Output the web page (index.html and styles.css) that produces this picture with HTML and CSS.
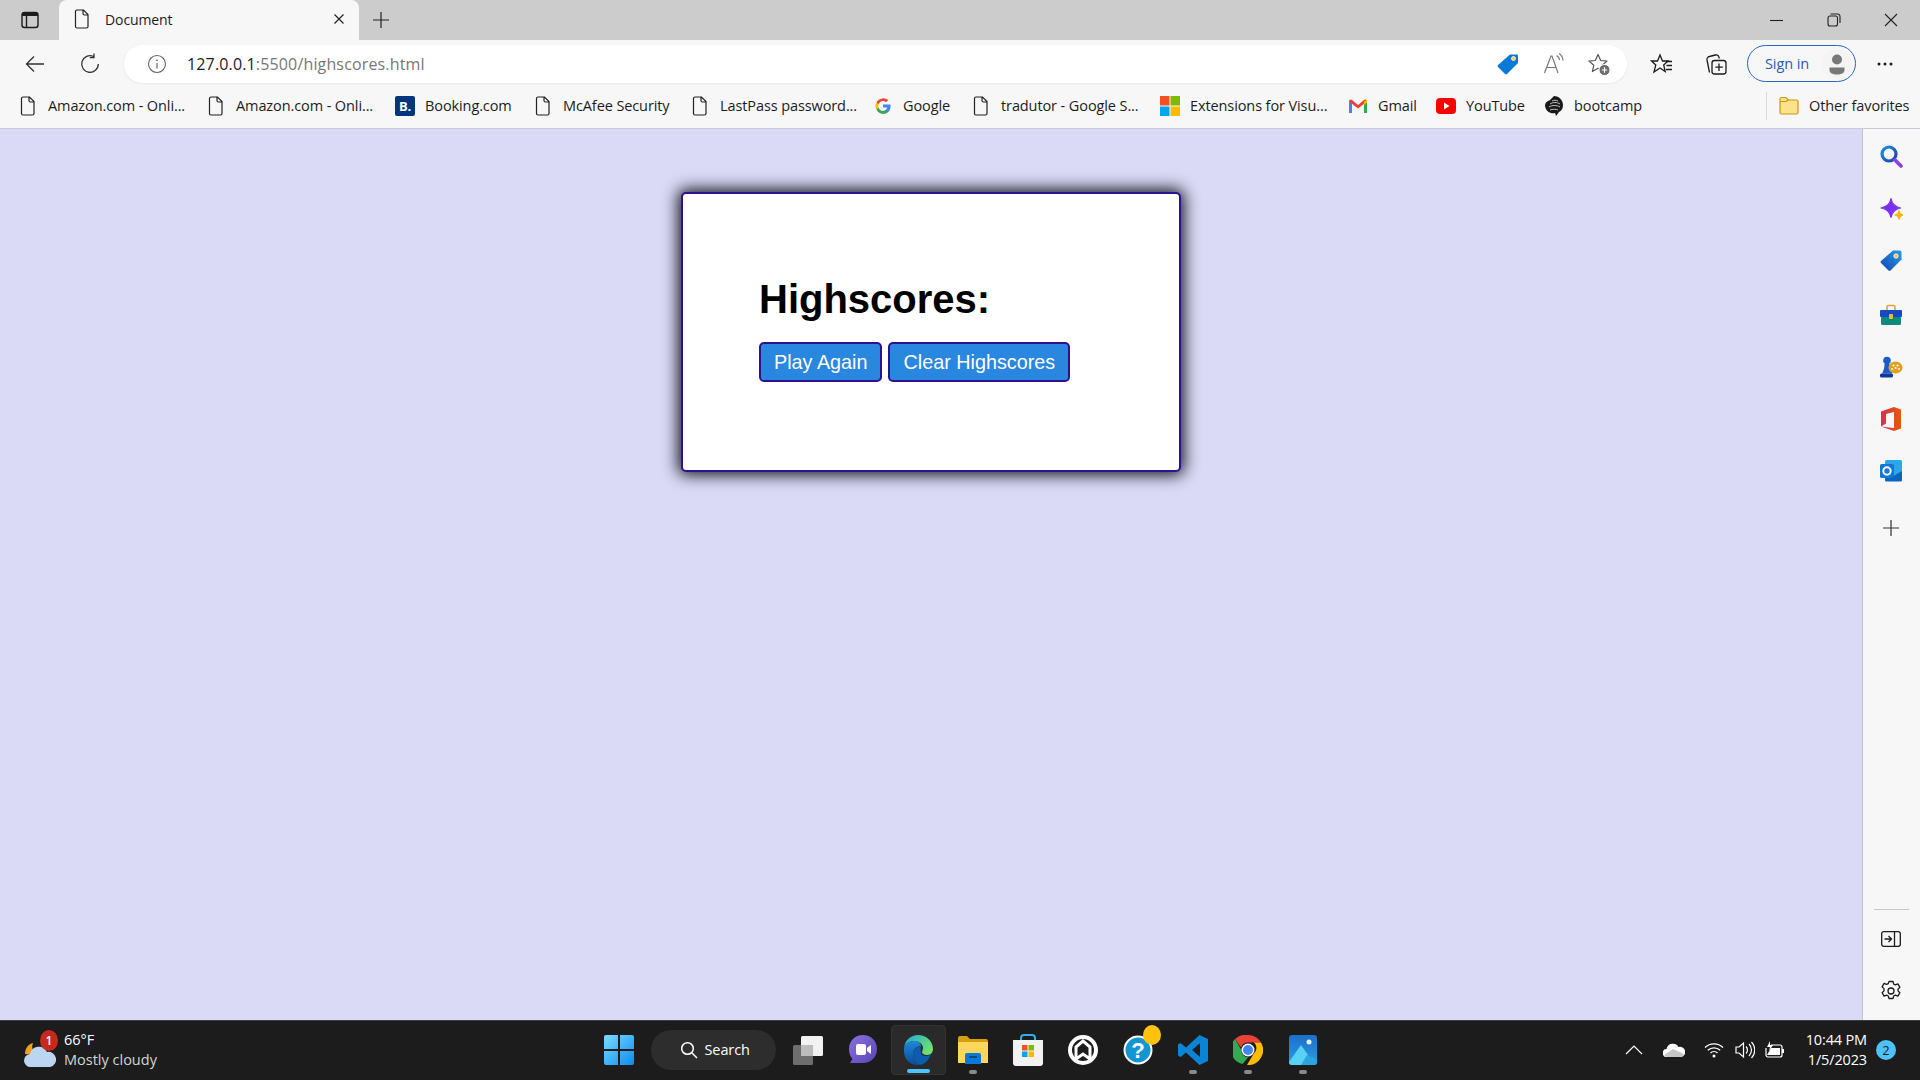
FILE: index.html
```html
<!DOCTYPE html>
<html lang="en">
<head>
<meta charset="utf-8">
<title>Document</title>
<link rel="stylesheet" href="styles.css">
</head>
<body>
<div class="screen">
  <header class="titlebar">
    <div class="slot tabs-btn">
      <svg width="20" height="20" viewBox="0 0 20 20"><rect x="2" y="2.500" width="16" height="15" rx="2.500" fill="none" stroke="#1c1c1c" stroke-width="1.400"/><path d="M2 6V5a2.500 2.500 0 0 1 2.500-2.500h11A2.500 2.500 0 0 1 18 5v1z" fill="#1c1c1c"/><path d="M6.500 6v11" stroke="#1c1c1c" stroke-width="1.400"/></svg>
    </div>
    <div class="tab">
      <svg class="doc" width="20" height="22" viewBox="0 0 20 22"><path d="M5 2h6.500L16 6.500V18.500a1.500 1.500 0 0 1-1.500 1.500H5a1.500 1.500 0 0 1-1.500-1.500v-15A1.500 1.500 0 0 1 5 2zM11 2v3.500A1.500 1.500 0 0 0 12.500 7H16" fill="none" stroke="#222" stroke-width="1.200"/></svg>
      <span class="tab-title">Document</span>
      <svg class="tab-close" width="12" height="12" viewBox="0 0 12 12"><path d="M1.500 1.500l9 9M10.500 1.500l-9 9" stroke="#222" stroke-width="1.200"/></svg>
    </div>
    <svg class="new-tab" width="18" height="18" viewBox="0 0 18 18"><path d="M9 1v16M1 9h16" stroke="#222" stroke-width="1.200"/></svg>
    <div class="window-controls">
      <svg width="14" height="14" viewBox="0 0 14 14"><path d="M0 7.500h13" stroke="#222" stroke-width="1.100"/></svg>
      <svg width="14" height="14" viewBox="0 0 14 14"><rect x="1" y="3" width="9.500" height="10" rx="2" fill="none" stroke="#222" stroke-width="1.100"/><path d="M3.500 1h7A2.500 2.500 0 0 1 13 3.500V10" fill="none" stroke="#222" stroke-width="1.100"/></svg>
      <svg width="14" height="14" viewBox="0 0 14 14"><path d="M1 1l12 12M13 1L1 13" stroke="#222" stroke-width="1.100"/></svg>
    </div>
  </header>

  <div class="toolbar">
    <button class="tool back" aria-label="Back"><svg width="22" height="22" viewBox="0 0 22 22"><path d="M20 11H2.500M10 3.500L2.500 11l7.500 7.500" fill="none" stroke="#333" stroke-width="1.300"/></svg></button>
    <button class="tool refresh" aria-label="Refresh"><svg width="22" height="22" viewBox="0 0 22 22"><path d="M14.500 3.500A8.300 8.300 0 1 0 19.300 11M15 0.500V4.700H10.800" fill="none" stroke="#333" stroke-width="1.300"/></svg></button>
    <div class="address">
      <svg class="info" width="20" height="20" viewBox="0 0 20 20"><circle cx="10" cy="10" r="8.500" fill="none" stroke="#666" stroke-width="1.100"/><path d="M10 9v5.500" stroke="#666" stroke-width="1.200"/><circle cx="10" cy="6.300" r="0.900" fill="#666"/></svg>
      <span class="url"><span class="host">127.0.0.1</span>:5500/highscores.html</span>
      <svg class="addr-tag" width="24" height="24" viewBox="0 0 24 24"><path d="M14 2.500h7a1 1 0 0 1 1 1v7.500L11 22a1.500 1.500 0 0 1-2 0L2 15a1.500 1.500 0 0 1 0-2z" fill="#0a78d6"/><circle cx="17.500" cy="6.500" r="2" fill="#f4c84a" stroke="#fff" stroke-width="0.800"/></svg>
      <svg class="addr-read" width="24" height="24" viewBox="0 0 24 24"><path d="M2.500 21L9 4h1l6 17M5 15.500h9" fill="none" stroke="#777" stroke-width="1.200"/><path d="M14.500 3.500a5.500 5.500 0 0 1 3 4.500M17 1.500a8.500 8.500 0 0 1 4 7" fill="none" stroke="#777" stroke-width="1.200"/></svg>
      <svg class="addr-fav" width="24" height="24" viewBox="0 0 24 24"><path d="M11 2.500l2.700 6 6.300.6-4.800 4.200 1.400 6.200L11 16.300 5.400 19.500l1.400-6.200L2 9.100l6.300-.6z" fill="none" stroke="#555" stroke-width="1.200" stroke-linejoin="round"/><circle cx="17.500" cy="18" r="5.500" fill="#6b6b6b" stroke="#fff" stroke-width="1"/><path d="M17.500 15.300v5.400M14.800 18h5.400" stroke="#fff" stroke-width="1.200"/></svg>
    </div>
    <button class="tool favs" aria-label="Favorites"><svg width="24" height="24" viewBox="0 0 24 24"><path d="M10 3l2.500 6H18l-4.300 4 1.500 6.500L10 16l-6 4 1.800-7L1.500 9H7.500z" fill="none" stroke="#1c1c1c" stroke-width="1.300"/><path d="M16 9.500h6M16.500 13.500h5.500M16 17.500h6" stroke="#1c1c1c" stroke-width="1.300"/></svg></button>
    <button class="tool colls" aria-label="Collections"><svg width="24" height="24" viewBox="0 0 24 24"><path d="M5.500 20.500L3 8a3 3 0 0 1 2.400-3.500l6-1.500a3 3 0 0 1 3.600 2.200L15.300 6.500" fill="none" stroke="#1c1c1c" stroke-width="1.300"/><rect x="8" y="8.500" width="14" height="13.500" rx="2.500" fill="#f7f7f7" stroke="#1c1c1c" stroke-width="1.300"/><path d="M15 11.500v7.500M11.300 15.200h7.500" stroke="#1c1c1c" stroke-width="1.300"/></svg></button>
    <div class="signin">
      <span>Sign in</span>
      <span class="avatar"><svg width="22" height="24" viewBox="0 0 22 24"><circle cx="11" cy="7.500" r="5" fill="#777"/><path d="M3.500 15.500h15V18c0 3-3 4.500-7.500 4.500S3.500 21 3.500 18z" fill="#777"/></svg></span>
    </div>
    <button class="tool more" aria-label="More"><svg width="18" height="6" viewBox="0 0 18 6"><circle cx="3" cy="3" r="1.500" fill="#1c1c1c"/><circle cx="9" cy="3" r="1.500" fill="#1c1c1c"/><circle cx="15" cy="3" r="1.500" fill="#1c1c1c"/></svg></button>
  </div>

  <nav class="bookmarks">
    <a class="bm w1"><svg class="ico" width="20" height="22" viewBox="0 0 20 22"><path d="M5 2h6.500L16 6.500V18.500a1.500 1.500 0 0 1-1.500 1.500H5a1.500 1.500 0 0 1-1.500-1.500v-15A1.500 1.500 0 0 1 5 2zM11 2v3.500A1.500 1.500 0 0 0 12.500 7H16" fill="none" stroke="#222" stroke-width="1.200"/></svg><span>Amazon.com - Onli...</span></a>
    <a class="bm w2"><svg class="ico" width="20" height="22" viewBox="0 0 20 22"><path d="M5 2h6.500L16 6.500V18.500a1.500 1.500 0 0 1-1.500 1.500H5a1.500 1.500 0 0 1-1.500-1.500v-15A1.500 1.500 0 0 1 5 2zM11 2v3.500A1.500 1.500 0 0 0 12.500 7H16" fill="none" stroke="#222" stroke-width="1.200"/></svg><span>Amazon.com - Onli...</span></a>
    <a class="bm w3"><span class="ico booking">B.</span><span>Booking.com</span></a>
    <a class="bm w4"><svg class="ico" width="20" height="22" viewBox="0 0 20 22"><path d="M5 2h6.500L16 6.500V18.500a1.500 1.500 0 0 1-1.500 1.500H5a1.500 1.500 0 0 1-1.500-1.500v-15A1.500 1.500 0 0 1 5 2zM11 2v3.500A1.500 1.500 0 0 0 12.500 7H16" fill="none" stroke="#222" stroke-width="1.200"/></svg><span>McAfee Security</span></a>
    <a class="bm w5"><svg class="ico" width="20" height="22" viewBox="0 0 20 22"><path d="M5 2h6.500L16 6.500V18.500a1.500 1.500 0 0 1-1.500 1.500H5a1.500 1.500 0 0 1-1.500-1.500v-15A1.500 1.500 0 0 1 5 2zM11 2v3.500A1.500 1.500 0 0 0 12.500 7H16" fill="none" stroke="#222" stroke-width="1.200"/></svg><span>LastPass password...</span></a>
    <a class="bm w6"><svg class="ico" width="20" height="20" viewBox="0 0 20 20"><path d="M17.500 10.200c0-.6 0-1.100-.1-1.600H10v3h4.300a3.700 3.700 0 0 1-1.600 2.400v2h2.600c1.500-1.400 2.200-3.400 2.200-5.800z" fill="#4285f4"/><path d="M10 18c2.100 0 3.900-.7 5.300-1.900l-2.600-2c-.7.500-1.600.8-2.700.8-2.100 0-3.800-1.400-4.400-3.200H3.500v2.100A8 8 0 0 0 10 18z" fill="#34a853"/><path d="M5.600 11.700a4.800 4.800 0 0 1 0-3.400V6.200H3.500a8 8 0 0 0 0 7.600z" fill="#fbbc05"/><path d="M10 5.100c1.200 0 2.200.4 3 1.200l2.300-2.300A8 8 0 0 0 3.500 6.200l2.100 2.100C6.200 6.500 7.900 5.100 10 5.100z" fill="#ea4335"/></svg><span>Google</span></a>
    <a class="bm w7"><svg class="ico" width="20" height="22" viewBox="0 0 20 22"><path d="M5 2h6.500L16 6.500V18.500a1.500 1.500 0 0 1-1.500 1.500H5a1.500 1.500 0 0 1-1.500-1.500v-15A1.500 1.500 0 0 1 5 2zM11 2v3.500A1.500 1.500 0 0 0 12.500 7H16" fill="none" stroke="#222" stroke-width="1.200"/></svg><span>tradutor - Google S...</span></a>
    <a class="bm w8"><svg class="ico" width="20" height="20" viewBox="0 0 20 20"><rect x="0" y="0" width="9.500" height="9.500" fill="#f25022"/><rect x="10.500" y="0" width="9.500" height="9.500" fill="#7fba00"/><rect x="0" y="10.500" width="9.500" height="9.500" fill="#00a4ef"/><rect x="10.500" y="10.500" width="9.500" height="9.500" fill="#ffb900"/></svg><span>Extensions for Visu...</span></a>
    <a class="bm w9"><svg class="ico" width="20" height="16" viewBox="0 0 20 16"><path d="M1 15V3l3 .5V15z" fill="#4285f4"/><path d="M16 15V3.500l3-.5v12z" fill="#34a853"/><path d="M1 3.500a1.800 1.800 0 0 1 3-1.500l6 5 6-5a1.800 1.800 0 0 1 3 1.500L10 10.500z" fill="#ea4335"/><path d="M16 3.500L19 2v2.500L16 7z" fill="#fbbc05"/></svg><span>Gmail</span></a>
    <a class="bm w10"><svg class="ico" width="20" height="16" viewBox="0 0 20 16"><rect width="20" height="16" rx="4" fill="#f00"/><path d="M8 4.500l5.500 3.500L8 11.500z" fill="#fff"/></svg><span>YouTube</span></a>
    <a class="bm w11"><svg class="ico" width="20" height="22" viewBox="0 0 20 22"><path d="M10 1c5 0 9 4 9 9 0 4-2 6-4 7l-3 4-1-3c-4 1-9-1-10-7C1 7 4 6 6 5z" fill="#1a1a1a"/><path d="M6 9c3-2 7-2 10 0M5 12c3-2 8-2 11 0M6 15c3-1 6-1 8 0M8 6c2-1 4-1 6 0" stroke="#e8e8e8" stroke-width="0.800" fill="none"/></svg><span>bootcamp</span></a>
    <a class="bm other"><svg class="ico" width="20" height="20" viewBox="0 0 20 20"><path d="M1 5V3a1.500 1.500 0 0 1 1.500-1.500H7L9.500 4H17.500A1.500 1.500 0 0 1 19 5.500V16.500A1.500 1.500 0 0 1 17.500 18H2.500A1.500 1.500 0 0 1 1 16.500z" fill="#fce38a" stroke="#c9971c" stroke-width="1.200"/><path d="M1 5.500h6L9.500 4" fill="none" stroke="#c9971c" stroke-width="1.200"/></svg><span>Other favorites</span></a>
  </nav>

  <div class="content">
    <main class="page">
      <section class="card">
        <h1>Highscores:</h1>
        <div class="actions">
          <button class="btn">Play Again</button>
          <button class="btn">Clear Highscores</button>
        </div>
      </section>
    </main>
    <aside class="sidebar">
      <svg class="side s1" width="24" height="24" viewBox="0 0 24 24"><defs><linearGradient id="gs" x1="0" y1="0" x2="1" y2="1"><stop offset="0" stop-color="#1a8fe3"/><stop offset="1" stop-color="#1f3fb0"/></linearGradient></defs><circle cx="10" cy="10" r="7" fill="none" stroke="url(#gs)" stroke-width="3.200"/><path d="M16 16l6 6" stroke="#8a3fe0" stroke-width="3.600" stroke-linecap="round"/></svg>
      <svg class="side s2" width="24" height="24" viewBox="-1.500 -1.500 24 24"><path d="M10.500 0c1 5.500 3.500 8 9.500 9.500-6 1.500-8.500 4-9.500 9.500C9.500 13.500 7 11 .5 9.500 7 8 9.500 5.500 10.500 0z" fill="#7b2ff0" stroke="#7b2ff0" stroke-width="1.200" stroke-linejoin="round"/><path d="M18.500 12c.5 2.500 1.500 3.500 4.500 4.500-3 1-4 2-4.500 4.500-.5-2.500-1.500-3.500-4.500-4.500 3-1 4-2 4.500-4.500z" fill="#f5b301" stroke="#f5b301" stroke-width="0.800" stroke-linejoin="round"/></svg>
      <svg class="side s3" width="24" height="24" viewBox="0 0 24 24"><defs><linearGradient id="gt" x1="1" y1="0" x2="0" y2="1"><stop offset="0" stop-color="#2a9be8"/><stop offset="1" stop-color="#1046b4"/></linearGradient></defs><path d="M14 1.500h7a1.500 1.500 0 0 1 1.500 1.500v7.500L11.500 21.500a1.500 1.500 0 0 1-2 0L2 14a1.500 1.500 0 0 1 0-2z" fill="url(#gt)"/><circle cx="17" cy="7" r="2.200" fill="#f6c342" stroke="#fff" stroke-width="0.800"/></svg>
      <svg class="side s4" width="24" height="24" viewBox="0 0 24 24"><path d="M8 7V4a1.500 1.500 0 0 1 1.500-1.500h5A1.500 1.500 0 0 1 16 4v3" fill="none" stroke="#e4a52c" stroke-width="1.600"/><rect x="2" y="13" width="20" height="9" rx="1.500" fill="#0e8a7d"/><rect x="1" y="7" width="22" height="7" rx="1" fill="#1549c2"/><rect x="10" y="11" width="4" height="5" rx="1" fill="#f4b33a"/></svg>
      <svg class="side s5" width="24" height="24" viewBox="0 0 24 24"><circle cx="8" cy="5.500" r="3.800" fill="#1a5cc8"/><path d="M5.500 9h5c0 4 1.500 7 3 9.500H3c1.500-2.500 2.500-5.500 2.500-9.500z" fill="#1a5cc8"/><rect x="1" y="18.500" width="13" height="4" rx="1.500" fill="#12379c"/><ellipse cx="16.500" cy="12.500" rx="7" ry="6" fill="#e0a020"/><circle cx="14.500" cy="10.500" r="1.100" fill="#fff"/><circle cx="18.500" cy="10.500" r="1.100" fill="#fff"/><circle cx="16.500" cy="13" r="1.100" fill="#fff"/><circle cx="13" cy="14" r="0.900" fill="#fff"/><circle cx="20" cy="14" r="0.900" fill="#fff"/></svg>
      <svg class="side s6" width="24" height="26" viewBox="0 0 24 26"><defs><linearGradient id="go" x1="0" y1="0" x2="1" y2="0"><stop offset="0" stop-color="#d6304f"/><stop offset="1" stop-color="#e35a0a"/></linearGradient></defs><path d="M2 5.500L15 1l7 2.500v19L15 25 2 20.500l13 1.500V6L7 8v9.500L2 20.500z" fill="url(#go)"/></svg>
      <svg class="side s7" width="24" height="24" viewBox="0 0 24 24"><rect x="6" y="1" width="17" height="21" rx="1.500" fill="#28a8ea"/><path d="M6 12l8.500 5 8.500-5v9a1.500 1.500 0 0 1-1.500 1.500h-14A1.500 1.500 0 0 1 6 21z" fill="#0a64c0"/><rect x="1" y="5" width="14" height="14" rx="1.500" fill="#0f78d4"/><circle cx="8" cy="12" r="3.700" fill="none" stroke="#fff" stroke-width="2"/></svg>
      <svg class="side s8" width="16" height="16" viewBox="0 0 16 16"><path d="M8 0v16M0 8h16" stroke="#333" stroke-width="1.200"/></svg>
      <div class="side-rule"></div>
      <svg class="side s9" width="20" height="16" viewBox="0 0 20 16"><rect x="0.700" y="0.700" width="18.600" height="14.600" rx="2" fill="none" stroke="#1c1c1c" stroke-width="1.300"/><path d="M13.500 0.700v14.600" stroke="#1c1c1c" stroke-width="1.300"/><path d="M3.500 8h7M7.500 5l3 3-3 3" fill="none" stroke="#1c1c1c" stroke-width="1.300"/></svg>
      <svg class="side s10" width="22" height="22" viewBox="0 0 22 22"><path d="M9 1.500h4l.7 2.600 1.700.8 2.500-1 2 3.400-1.900 1.800v1.800l1.900 1.800-2 3.400-2.500-1-1.700.9-.7 2.500H9l-.7-2.500-1.700-.9-2.500 1-2-3.400 1.900-1.800V8.600L2.100 6.800l2-3.400 2.500 1 1.700-.8z" fill="none" stroke="#1c1c1c" stroke-width="1.300" stroke-linejoin="round"/><circle cx="11" cy="11" r="3" fill="none" stroke="#1c1c1c" stroke-width="1.300"/></svg>
    </aside>
  </div>

  <footer class="taskbar">
    <div class="tb-left">
      <div class="weather">
        <svg width="36" height="36" viewBox="0 0 36 36"><path d="M11 9a9 9 0 0 0 4 12L3 20C3 15 6 10 11 9z" fill="#f0a020"/><path d="M9 33a6.500 6.500 0 0 1-1-13 9 9 0 0 1 17-2 7.500 7.500 0 0 1 3 15z" fill="#bcd6f2"/></svg>
        <span class="w-badge">1</span>
      </div>
      <div class="w-text"><span class="w-temp">66°F</span><span class="w-desc">Mostly cloudy</span></div>
    </div>
    <div class="tb-center">
      <div class="tb-icon start"><svg width="30" height="30" viewBox="0 0 30 30"><defs><linearGradient id="gw" x1="0" y1="0" x2="1" y2="1"><stop offset="0" stop-color="#7bdcff"/><stop offset="1" stop-color="#0a8cf0"/></linearGradient></defs><path d="M0 2a2 2 0 0 1 2-2h12v14H0zM16 0h12a2 2 0 0 1 2 2v12H16zM0 16h14v14H2a2 2 0 0 1-2-2zM16 16h14v12a2 2 0 0 1-2 2H16z" fill="url(#gw)"/></svg></div>
      <div class="search"><svg width="18" height="18" viewBox="0 0 18 18"><circle cx="7.500" cy="7.500" r="5.800" fill="none" stroke="#fff" stroke-width="1.500"/><path d="M11.800 11.800L17 17" stroke="#fff" stroke-width="1.500"/></svg><span>Search</span></div>
      <div class="tb-icon"><svg width="30" height="30" viewBox="0 0 30 30"><rect x="0" y="10" width="20" height="20" rx="1.500" fill="#6d6d6d"/><rect x="8" y="1" width="22" height="20" rx="1.500" fill="#f2f2f2"/><rect x="8" y="10" width="12" height="11" fill="#bcbcbc"/></svg></div>
      <div class="tb-icon"><svg width="30" height="32" viewBox="0 0 30 32"><defs><linearGradient id="gc" x1="0" y1="0" x2="1" y2="1"><stop offset="0" stop-color="#8c6fe0"/><stop offset="1" stop-color="#5945b5"/></linearGradient></defs><path d="M15 1c8 0 14 6 14 14s-6 14-14 14H2l2.500-4C2 22 1 19 1 15 1 7 7 1 15 1z" fill="url(#gc)"/><rect x="8" y="10" width="10" height="11" rx="2" fill="#fff"/><path d="M19 14l4-3v9l-4-3z" fill="#fff"/></svg></div>
      <div class="tb-icon edge active"><svg width="30" height="32" viewBox="0 0 30 32"><defs><linearGradient id="ge1" x1="0" y1="0" x2="1" y2="0.600"><stop offset="0" stop-color="#1fa5dd"/><stop offset="1" stop-color="#6fe26d"/></linearGradient><linearGradient id="ge2" x1="0" y1="0" x2="0" y2="1"><stop offset="0" stop-color="#1d8ad8"/><stop offset="1" stop-color="#0c4a9a"/></linearGradient></defs><path d="M15 1c8 0 15 6 15 14 0 3-2 6-6 6-3 0-5-1-5-3 0-1 1-2 1-4 0-4-4-7-9-7-5 0-9 3-10 7C2 6 8 1 15 1z" fill="url(#ge1)"/><path d="M1 14c1-4 5-7 10-7 4 0 7 2 7 5-3 0-8 2-8 8 0 5 3 9 7 11-1 0-2 0-3 0C6 31 0 24 1 14z" fill="url(#ge2)"/><path d="M18 18c0 3 2 4 5 4 2 0 4-1 5-2-2 6-6 10-11 11-4-2-7-6-7-11 0-5 4-7 8-8-.5 2-.5 4 0 6z" fill="#0d5cb0"/></svg></div>
      <div class="tb-icon running"><svg width="30" height="28" viewBox="0 0 30 28"><path d="M0 2a2 2 0 0 1 2-2h7l3 3h16a2 2 0 0 1 2 2v3H0z" fill="#d99e0b"/><path d="M0 6h30v21H0z" fill="#fcd75e"/><path d="M7 28V19a2 2 0 0 1 2-2h12a2 2 0 0 1 2 2v9z" fill="#0a78d6"/><path d="M11 21h8" stroke="#05345e" stroke-width="1.300"/></svg></div>
      <div class="tb-icon"><svg width="30" height="32" viewBox="0 0 30 32"><path d="M8 6V4a3 3 0 0 1 3-3h8a3 3 0 0 1 3 3v2" fill="none" stroke="#2bb0e8" stroke-width="2"/><path d="M0 6h30v23a3 3 0 0 1-3 3H3a3 3 0 0 1-3-3z" fill="#f2f2f2"/><rect x="9" y="11" width="5.500" height="5.500" fill="#f25022"/><rect x="15.500" y="11" width="5.500" height="5.500" fill="#7fba00"/><rect x="9" y="17.500" width="5.500" height="5.500" fill="#00a4ef"/><rect x="15.500" y="17.500" width="5.500" height="5.500" fill="#ffb900"/></svg></div>
      <div class="tb-icon"><svg width="30" height="30" viewBox="0 0 30 30"><circle cx="15" cy="15" r="13" fill="none" stroke="#fff" stroke-width="4"/><path d="M8 24V12l7-6 7 6v12l-7-5z" fill="none" stroke="#fff" stroke-width="3"/></svg></div>
      <div class="tb-icon help"><svg width="30" height="30" viewBox="0 0 30 30"><circle cx="15" cy="15" r="13.500" fill="#1495d3" stroke="#fff" stroke-width="2"/><text class="help-q" x="15" y="23" text-anchor="middle">?</text></svg><span class="help-dot"></span></div>
      <div class="tb-icon running"><svg width="30" height="30" viewBox="0 0 30 30"><path d="M21.500 0L30 4v22l-8.500 4L8 17.500 2.500 22 0 20.500V9.500L2.500 8 8 12.500zM22 8l-8 7 8 7z" fill="#0a84d6"/></svg></div>
      <div class="tb-icon running"><svg width="30" height="30" viewBox="0 0 30 30"><path d="M15 0a15 15 0 0 1 13 7.500H15a7.500 7.500 0 0 0-7 5L2 4a15 15 0 0 1 13-4z" fill="#ea4335"/><path d="M2 4l6.500 11.300A7 7 0 0 0 15 22.500L9.500 29A15 15 0 0 1 2 4z" fill="#34a853"/><path d="M28 7.500A15 15 0 0 1 14 30l6.500-11A7.500 7.500 0 0 0 21 7.500z" fill="#fbbc05"/><circle cx="15" cy="15" r="6.500" fill="#fff"/><circle cx="15" cy="15" r="5" fill="#4285f4"/></svg></div>
      <div class="tb-icon running"><svg width="28" height="30" viewBox="0 0 28 30"><defs><linearGradient id="gp" x1="0" y1="0" x2="0" y2="1"><stop offset="0" stop-color="#1b6fc8"/><stop offset="1" stop-color="#2f9de0"/></linearGradient></defs><rect width="28" height="30" rx="3" fill="url(#gp)"/><circle cx="20" cy="7" r="2.500" fill="#e8f2fb"/><path d="M0 27L12 10l7 10-4 10H3a3 3 0 0 1-3-3z" fill="#5ad1f2"/><path d="M12 30l6-10 10 5v2a3 3 0 0 1-3 3z" fill="#2aa5e0"/></svg></div>
    </div>
    <div class="tb-right">
      <svg class="tray caret" width="18" height="10" viewBox="0 0 18 10"><path d="M1 9l8-8 8 8" fill="none" stroke="#fff" stroke-width="1.200"/></svg>
      <svg class="tray cloud" width="22" height="14" viewBox="0 0 22 14"><path d="M4 14a4 4 0 0 1-.5-8A6.500 6.500 0 0 1 15.500 4a5 5 0 0 1 3 10z" fill="#fff"/><path d="M1 12l9-6 11 5-2 3H4z" fill="#c8c8c8"/></svg>
      <svg class="tray wifi" width="20" height="16" viewBox="0 0 20 16"><path d="M1 5.500a13 13 0 0 1 18 0M3.800 8.300a9 9 0 0 1 12.400 0M6.500 11a5 5 0 0 1 7 0" fill="none" stroke="#fff" stroke-width="1.300"/><circle cx="10" cy="14" r="1.500" fill="#fff"/></svg>
      <svg class="tray vol" width="20" height="18" viewBox="0 0 20 18"><path d="M1 6h3l4.500-4v14L4 12H1z" fill="none" stroke="#fff" stroke-width="1.200"/><path d="M11 5.500a5 5 0 0 1 0 7M14 3a8.500 8.500 0 0 1 0 12M16.500 1a11.500 11.500 0 0 1 0 16" fill="none" stroke="#fff" stroke-width="1.200"/></svg>
      <svg class="tray batt" width="20" height="18" viewBox="0 0 20 18"><path d="M6 4h9a2 2 0 0 1 2 2v8a2 2 0 0 1-2 2H3a2 2 0 0 1-2-2V7" fill="none" stroke="#fff" stroke-width="1.200"/><path d="M2 14h13V7H6z" fill="#fff"/><path d="M17 8h2v4h-2z" fill="#fff"/><path d="M5 0L2 6h3l-1 4 4-6H5z" fill="#fff"/></svg>
      <div class="clock"><span>10:44 PM</span><span>1/5/2023</span></div>
      <span class="notif">2</span>
    </div>
  </footer>
</div>
</body>
</html>
```
FILE: styles.css
```css
* { box-sizing: border-box; }
html, body { margin: 0; height: 100%; overflow: hidden; }
body { font-family: "Open Sans", "Noto Sans", sans-serif; color: #1c1c1c; }
.screen { display: flex; flex-direction: column; width: 1920px; height: 1080px; }

/* title bar */
.titlebar { display: flex; align-items: flex-end; height: 40px; background: #cccccc; flex: none; }
.slot.tabs-btn { width: 59px; height: 40px; display: flex; align-items: center; justify-content: center; }
.tab { width: 300px; height: 40px; background: #f7f7f7; border-radius: 8px 8px 0 0; display: flex; align-items: center; padding: 0 14px 2px 13px; }
.tab-title { font-size: 14px; margin-left: 13px; flex: 1; letter-spacing: -0.1px; }
.new-tab { align-self: center; margin-left: 13px; }
.window-controls { margin-left: auto; height: 40px; display: flex; align-items: center; gap: 43px; padding-right: 22px; }

/* toolbar */
.toolbar { height: 45px; padding-top: 5px; flex: none; background: #f7f7f7; display: flex; align-items: flex-start; }
.tool { background: none; border: 0; padding: 0; height: 38px; display: flex; align-items: center; justify-content: center; }
.back { width: 46px; margin-left: 12px; }
.refresh { width: 46px; margin-left: 9px; margin-right: 11px; }
.address { width: 1503px; height: 38px; background: #fff; border-radius: 19px; display: flex; align-items: center; padding-left: 23px; box-shadow: 0 1px 3px rgba(0,0,0,.06); }
.url { font-size: 16px; margin-left: 20px; color: #777; letter-spacing: 0.15px; flex: 1; }
.host { color: #1c1c1c; }
.addr-read { margin-left: 22px; }
.addr-fav { margin-left: 21px; margin-right: 16px; }
.favs { width: 46px; margin-left: 12px; }
.colls { width: 46px; margin-left: 8px; }
.signin { width: 109px; height: 37px; margin-left: 8px; border: 1.500px solid #2a66c4; border-radius: 19px; display: flex; align-items: center; justify-content: space-between; padding: 0 3px 0 17px; font-size: 14.500px; color: #1d5cc0; letter-spacing: -0.1px; }
.avatar { width: 30px; height: 30px; border-radius: 50%; background: #f4f4f4; display: flex; align-items: center; justify-content: center; }
.more { width: 18px; margin-left: 20px; }

/* bookmarks */
.bookmarks { height: 44px; flex: none; background: #f7f7f7; border-bottom: 1px solid #c9c9d6; display: flex; align-items: center; padding: 0 0 2px 18px; font-size: 14.500px; }
.bm { display: flex; align-items: center; flex: none; white-space: nowrap; letter-spacing: -0.1px; }
.ico { flex: none; margin-right: 10px; }
.w1 { width: 188px; } .w2 { width: 189px; } .w3 { width: 138px; } .w4 { width: 157px; }
.w5 { width: 183px; } .w6 { width: 98px; } .w7 { width: 189px; } .w8 { width: 188px; }
.w9 { width: 88px; } .w10 { width: 108px; } .w11 { width: 222px; }
.booking { width: 20px; height: 20px; border-radius: 2px; background: #003580; color: #fff; font: 700 13px "Open Sans", sans-serif; display: flex; align-items: center; justify-content: center; }
.other { border-left: 1px solid #d8d8d8; padding-left: 12px; height: 28px; }

/* content */
.content { flex: 1; display: flex; min-height: 0; }
.page { flex: 1; background: #dadaf6; }
.card { width: 500px; height: 280px; margin: 63px auto 0; background: #fff; border: 2px solid #2e1190; border-radius: 5px; box-shadow: 0 0 16px 3px #14141f; padding: 82px 76px 0; font-family: "Liberation Sans", Arial, sans-serif; }
h1 { margin: 0 0 20px; font-size: 40px; line-height: 46px; font-weight: 700; color: #000; }
.actions { display: flex; gap: 6px; }
.btn { height: 40px; padding: 0 13px; background: #2a87e0; color: #fff; border: 2px solid #2e1190; border-radius: 5px; font: 19.800px "Liberation Sans", Arial, sans-serif; }

/* sidebar */
.sidebar { width: 58px; background: #f7f7f7; border-left: 1px solid #c4c4c4; display: flex; flex-direction: column; align-items: center; padding: 15px 1px 0 0; }
.side { flex: none; }
.s2 { margin-top: 29px; } .s3 { margin-top: 28px; } .s4 { margin-top: 30px; } .s5 { margin-top: 28px; }
.s6 { margin-top: 27px; } .s7 { margin-top: 27px; } .s8 { margin-top: 37px; }
.side-rule { width: 35px; height: 1px; background: #c8c8c8; margin-top: auto; }
.s9 { margin-top: 21px; }
.s10 { margin-top: 33px; margin-bottom: 18px; }

/* taskbar */
.taskbar { height: 60px; flex: none; background: #1c1c1c; border-top: 1px solid #3c3c3c; display: grid; grid-template-columns: 1fr auto 1fr; align-items: center; padding-bottom: 2px; color: #fff; }
.tb-left { display: flex; align-items: center; padding-left: 22px; }
.weather { width: 42px; height: 40px; position: relative; display: flex; align-items: flex-end; }
.w-badge { position: absolute; left: 18px; top: 0; width: 18px; height: 21px; border-radius: 50%; background: #c42b1c; font-size: 12px; font-weight: 600; display: flex; align-items: center; justify-content: center; }
.w-text { display: flex; flex-direction: column; font-size: 14.500px; line-height: 20px; }
.w-desc { color: #d4d4d4; }
.tb-center { display: flex; align-items: center; padding-left: 2px; }
.tb-icon { width: 55px; height: 50px; display: flex; align-items: center; justify-content: center; position: relative; }
.start { width: 54px; }
.search { width: 125px; height: 40px; border-radius: 20px; background: #2d2d2d; display: flex; align-items: center; padding-left: 29px; gap: 7px; font-size: 14.500px; margin: 0 5px; letter-spacing: -0.1px; }
.edge.active { background: #2a2a2a; border-radius: 4px; border: 1px solid #333; }
.edge.active::after { content: ""; position: absolute; left: 15px; right: 15px; bottom: 1px; height: 4px; border-radius: 2px; background: #4cc2ff; }
.running::after { content: ""; position: absolute; left: 50%; margin-left: -4px; bottom: 1px; width: 8px; height: 4px; border-radius: 2px; background: #8a8a8a; }
.help-q { font: 700 22px "Liberation Sans", sans-serif; fill: #fff; }
.help-dot { position: absolute; right: 5px; top: 0; width: 18px; height: 20px; border-radius: 50%; background: #ffc20e; }
.tb-right { display: flex; align-items: center; justify-content: flex-end; }
.caret { margin-right: 20px; }
.cloud { margin-right: 19px; }
.wifi { margin-right: 11px; }
.vol { margin-right: 10px; }
.batt { margin-right: 21px; }
.clock { display: flex; flex-direction: column; align-items: flex-end; font-size: 14.500px; line-height: 20px; letter-spacing: -0.15px; }
.notif { width: 20px; height: 20px; border-radius: 50%; background: #4cc2ff; color: #1c1c1c; font-size: 13px; display: flex; align-items: center; justify-content: center; margin: 0 24px 0 9px; }
```
